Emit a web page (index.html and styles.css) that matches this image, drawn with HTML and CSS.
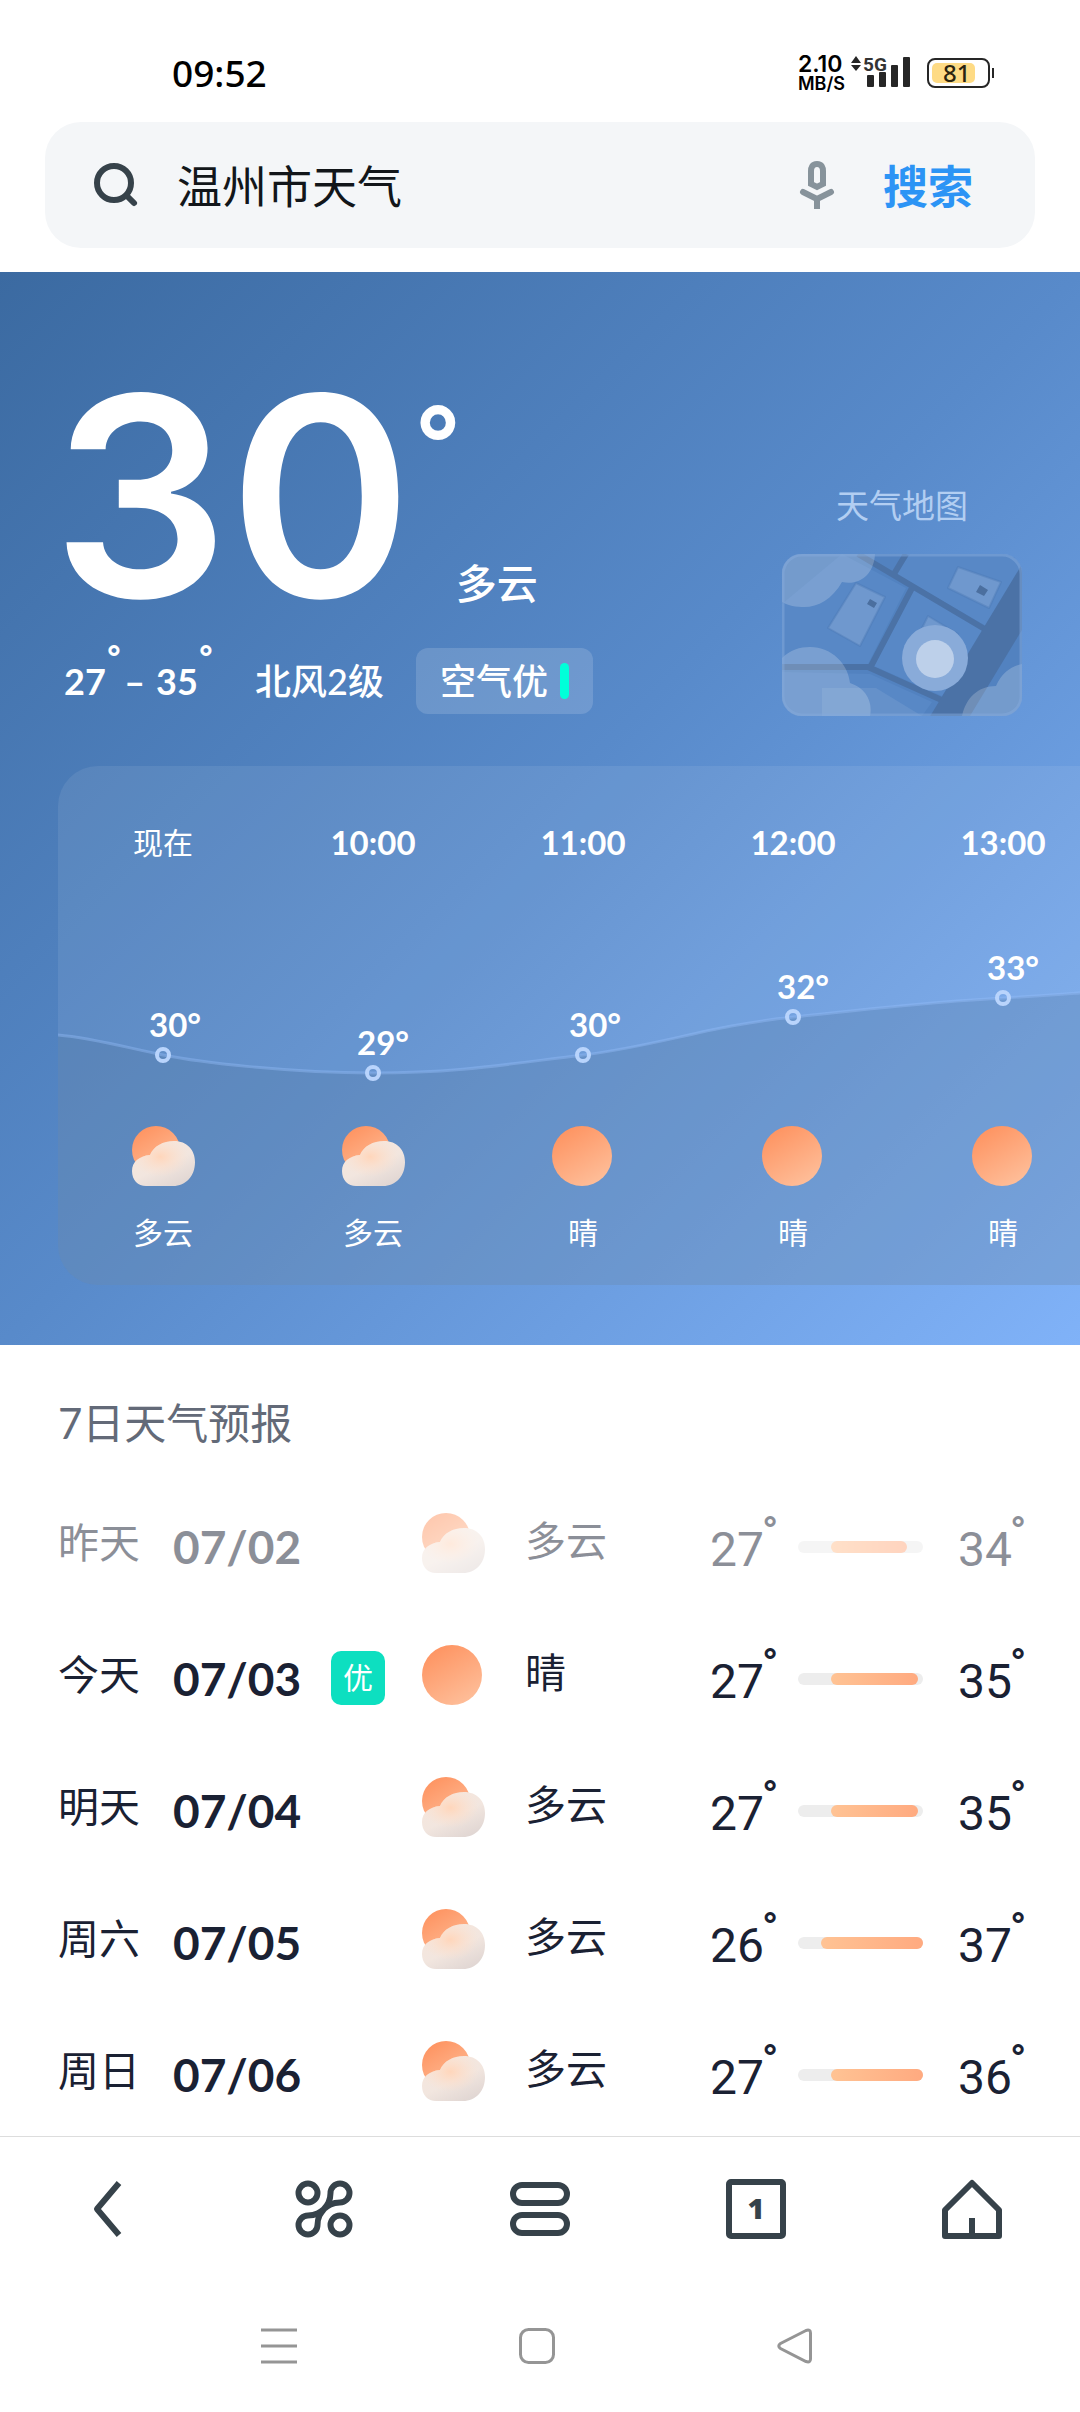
FILE: index.html
```html
<!DOCTYPE html>
<html lang="zh-CN">
<head>
    <meta charset="UTF-8">
    <meta name="viewport" content="width=device-width, initial-scale=1.0">
    <title>温州市天气</title>
    <link rel="stylesheet" href="styles.css">
</head>
<body>

    <!-- shared gradients and weather icons -->
    <svg class="defs" aria-hidden="true">
        <defs>
            <linearGradient id="sunFill" x1="0.2" y1="0" x2="0.8" y2="1">
                <stop offset="0" stop-color="#fe925f"/>
                <stop offset="1" stop-color="#fec09c"/>
            </linearGradient>
            <linearGradient id="cloudFill" x1="0.2" y1="0.1" x2="0.8" y2="1">
                <stop offset="0" stop-color="#f6e6dc"/>
                <stop offset="0.5" stop-color="#f2e6df"/>
                <stop offset="1" stop-color="#dfd5d2"/>
            </linearGradient>
            <radialGradient id="cloudGlow" cx="0.45" cy="0.35" r="0.45">
                <stop offset="0" stop-color="#ffd6bb"/>
                <stop offset="1" stop-color="#ffe0cc" stop-opacity="0"/>
            </radialGradient>
            <symbol id="sunny" viewBox="0 0 63 60">
                <circle cx="30" cy="30" r="30" fill="url(#sunFill)"/>
            </symbol>
            <symbol id="cloudy" viewBox="0 0 63 60">
                <circle cx="24" cy="24" r="24" fill="url(#sunFill)"/>
                <path fill="url(#cloudFill)" d="M14 60C6 60 0 54 0 45C0 36 7 30 18 29C22 20 31 15 42 15C55 15 63 24 63 36C63 50 54 60 41 60Z"/>
                <path fill="url(#cloudGlow)" d="M14 60C6 60 0 54 0 45C0 36 7 30 18 29C22 20 31 15 42 15C55 15 63 24 63 36C63 50 54 60 41 60Z"/>
            </symbol>
        </defs>
    </svg>

    <header>
        <div class="status">
            <span class="clock">09:52</span>
            <div class="status-right">
                <div class="speed"><b>2.10</b><span>MB/S</span></div>
                <svg class="signal" width="60" height="36" viewBox="0 0 60 36">
                    <path fill="#262626" d="M0 8L5 1L10 8ZM0 10L5 16L10 10Z"/>
                    <text x="12" y="16">5G</text>
                    <g fill="#262626">
                        <rect x="16" y="20" width="7" height="12" rx="1"/>
                        <rect x="28" y="17" width="7" height="15" rx="1"/>
                        <rect x="40" y="10" width="7" height="22" rx="1"/>
                        <rect x="52" y="2" width="7" height="30" rx="1"/>
                    </g>
                </svg>
                <div class="battery"><span>81</span></div>
            </div>
        </div>

        <form class="search">
            <svg width="46" height="46" viewBox="0 0 46 46" fill="none" stroke="#36424a" stroke-width="6" stroke-linecap="round">
                <circle cx="21" cy="21" r="17"/>
                <path d="M34 34L41 41"/>
            </svg>
            <input type="text" value="温州市天气" aria-label="搜索天气">
            <button type="button" class="mic" aria-label="语音">
                <svg width="36" height="50" viewBox="0 0 36 50" fill="none" stroke="#87939b" stroke-width="6">
                    <path d="M18 4C13 4 12 8 12 11V24L18 27L24 24V11C24 8 23 4 18 4Z"/>
                    <path d="M18 49V39"/>
                    <path stroke-linecap="round" stroke-linejoin="round" d="M4 32L18 39L32 32"/>
                </svg>
            </button>
            <button type="button" class="go">搜索</button>
        </form>
    </header>

    <main>
        <section class="hero">
            <div class="now">
                <div class="now-left">
                    <div class="temp-line">
                        <span class="temp">30</span><span class="deg">°</span>
                        <span class="sky">多云</span>
                    </div>
                    <div class="detail">
                        <div class="range"><span>27</span><sup>°</sup><span class="dash">–</span><span>35</span><sup>°</sup></div>
                        <span class="wind">北风2级</span>
                        <span class="air">空气优<i></i></span>
                    </div>
                </div>
                <a class="map" href="#">
                    <span>天气地图</span>
                    <svg width="240" height="162" viewBox="0 0 240 162">
                        <clipPath id="mapClip"><rect width="240" height="162" rx="20"/></clipPath>
                        <g clip-path="url(#mapClip)">
                            <rect width="240" height="162" fill="#5282c0"/>
                            <path fill="#5888c6" d="M128 0H240V20L204 72L114 20ZM130 34L204 78L160 142L92 112ZM88 120L150 148L140 162H0V118ZM0 50L60 0L124 34L86 110H0Z"/>
                            <g fill="none" stroke="#4b72a6" stroke-width="6">
                                <path d="M76 0L206 77M124 0L112 20M130 34L88 114M0 113H86L164 148"/>
                                <path stroke-width="34" d="M260 10L156 182"/>
                            </g>
                            <path fill="#fff" fill-opacity=".14" stroke="#4b79b3" stroke-opacity=".4" stroke-width="2" stroke-linejoin="round" d="M74 29L103 43L78 92L46 74ZM176 13L219 28L207 54L166 34ZM146 62L176 80L160 124L122 110Z"/>
                            <path fill="#4b6f9f" d="M88 45L95 49L92 54L85 50ZM198 31L206 36L202 42L194 38Z"/>
                            <path fill="#fff" fill-opacity=".08" d="M40 134H94L140 162H40Z"/>
                            <path fill="#fff" fill-opacity=".2" d="M0 0H93C92 20 78 32 60 28C50 46 34 54 20 53C10 53 4 50 0 48ZM0 104C8 96 18 93 28 93C50 93 66 110 68 129C84 134 91 148 88 162H0ZM180 162C184 144 196 132 214 132C220 118 230 112 240 110V162Z"/>
                            <circle cx="153" cy="104" r="33" fill="#89abd9"/>
                            <circle cx="153" cy="105" r="19" fill="#bdd0ea"/>
                        </g>
                        <rect x="1" y="1" width="238" height="160" rx="19" fill="none" stroke="#83a9dc" stroke-opacity=".5" stroke-width="3"/>
                    </svg>
                </a>
            </div>

            <div class="hourly">
                <svg class="curve" width="1050" height="519" viewBox="0 0 1050 519">
                    <path class="area" d="M0 269C35 272 70 282 105 289S230 307 315 307S450 298 525 289S650 260 735 251S875 236 945 232S1015 227 1050 225V519H0Z"/>
                    <path class="line" d="M0 269C35 272 70 282 105 289S230 307 315 307S450 298 525 289S650 260 735 251S875 236 945 232S1015 227 1050 225"/>
                    <g class="dots">
                        <circle cx="105" cy="289" r="6"/>
                        <circle cx="315" cy="307" r="6"/>
                        <circle cx="525" cy="289" r="6"/>
                        <circle cx="735" cy="251" r="6"/>
                        <circle cx="945" cy="232" r="6"/>
                    </g>
                    <text x="117" y="271">30°</text>
                    <text x="325" y="289">29°</text>
                    <text x="537" y="271">30°</text>
                    <text x="745" y="233">32°</text>
                    <text x="955" y="214">33°</text>
                </svg>
                <div class="hour"><span class="now-label">现在</span><svg><use href="#cloudy"/></svg><em>多云</em></div>
                <div class="hour"><span>10:00</span><svg><use href="#cloudy"/></svg><em>多云</em></div>
                <div class="hour"><span>11:00</span><svg><use href="#sunny"/></svg><em>晴</em></div>
                <div class="hour"><span>12:00</span><svg><use href="#sunny"/></svg><em>晴</em></div>
                <div class="hour"><span>13:00</span><svg><use href="#sunny"/></svg><em>晴</em></div>
            </div>
        </section>

        <section class="forecast">
            <h2>7日天气预报</h2>
            <table>
                <colgroup>
                    <col class="c-day"><col class="c-date"><col class="c-air"><col class="c-icon"><col>
                    <col class="c-low"><col class="c-bar"><col class="c-high">
                </colgroup>
                <tr class="past">
                    <td>昨天</td><td class="date">07/02</td><td></td>
                    <td><svg><use href="#cloudy"/></svg></td><td class="desc">多云</td>
                    <td class="num"><span>27</span><sup>°</sup></td>
                    <td class="scale"><div class="bar"><i style="margin-left: 26%; width: 61%"></i></div></td>
                    <td class="num"><span>34</span><sup>°</sup></td>
                </tr>
                <tr>
                    <td>今天</td><td class="date">07/03</td><td class="air-cell"><span class="badge">优</span></td>
                    <td><svg><use href="#sunny"/></svg></td><td class="desc">晴</td>
                    <td class="num"><span>27</span><sup>°</sup></td>
                    <td class="scale"><div class="bar"><i style="margin-left: 26%; width: 70%"></i></div></td>
                    <td class="num"><span>35</span><sup>°</sup></td>
                </tr>
                <tr>
                    <td>明天</td><td class="date">07/04</td><td></td>
                    <td><svg><use href="#cloudy"/></svg></td><td class="desc">多云</td>
                    <td class="num"><span>27</span><sup>°</sup></td>
                    <td class="scale"><div class="bar"><i style="margin-left: 26%; width: 70%"></i></div></td>
                    <td class="num"><span>35</span><sup>°</sup></td>
                </tr>
                <tr>
                    <td>周六</td><td class="date">07/05</td><td></td>
                    <td><svg><use href="#cloudy"/></svg></td><td class="desc">多云</td>
                    <td class="num"><span>26</span><sup>°</sup></td>
                    <td class="scale"><div class="bar"><i style="margin-left: 18%; width: 82%"></i></div></td>
                    <td class="num"><span>37</span><sup>°</sup></td>
                </tr>
                <tr>
                    <td>周日</td><td class="date">07/06</td><td></td>
                    <td><svg><use href="#cloudy"/></svg></td><td class="desc">多云</td>
                    <td class="num"><span>27</span><sup>°</sup></td>
                    <td class="scale"><div class="bar"><i style="margin-left: 26%; width: 74%"></i></div></td>
                    <td class="num"><span>36</span><sup>°</sup></td>
                </tr>
            </table>
        </section>
    </main>

    <nav class="toolbar">
        <button aria-label="返回"><svg viewBox="0 0 60 60"><path d="M41 4L19 30L41 56" stroke-linejoin="round"/></svg></button>
        <button aria-label="发现"><svg viewBox="0 0 60 60">
            <circle cx="14" cy="14" r="9.5"/><circle cx="46" cy="46" r="9.5"/>
            <path d="M46 4.5A9.5 9.5 0 0 1 46 23.5C30 23.5 30 36.5 14 36.5A9.5 9.5 0 1 0 23.5 46C23.5 30 36.5 30 36.5 14A9.5 9.5 0 0 1 46 4.5"/>
        </svg></button>
        <button aria-label="菜单"><svg viewBox="0 0 60 60">
            <rect x="3" y="6" width="54" height="18" rx="9"/><rect x="3" y="36" width="54" height="18" rx="9"/>
        </svg></button>
        <button aria-label="标签页"><svg viewBox="0 0 60 60">
            <rect x="3" y="3" width="54" height="54" rx="2"/><text x="30" y="40">1</text>
        </svg></button>
        <button aria-label="主页"><svg viewBox="0 0 60 60">
            <path d="M3 31L30 4L57 31V57H3ZM30 57V39" stroke-linejoin="round"/>
        </svg></button>
    </nav>

    <nav class="system">
        <button aria-label="最近任务"><svg viewBox="0 0 36 36"><path d="M0 2H36M0 18H36M0 34H36"/></svg></button>
        <button aria-label="桌面"><svg viewBox="0 0 36 36"><rect x="1.500" y="1.500" width="33" height="33" rx="8"/></svg></button>
        <button aria-label="后退"><svg viewBox="0 0 36 36"><path d="M29 2.500L3.500 15.500Q0 18 3.500 20.500L29 33.500Q33.500 35 33.500 31V5Q33.500 1 29 2.500Z"/></svg></button>
    </nav>

</body>
</html>
```
FILE: styles.css
```css
* { box-sizing: border-box; }
html, body { height: 100%; }
body { margin: 0; display: flex; flex-direction: column; background: #fff; color: #1a2133; font-family: Lato, "Noto Sans CJK SC", sans-serif; }
button { border: none; padding: 0; background: none; font-family: inherit; cursor: pointer; }
i, em { font-style: normal; }
svg { display: block; flex: none; }
.defs { position: absolute; width: 0; height: 0; }

/* status bar */
header { flex: none; padding-bottom: 24px; background: #fff; }
.status { display: flex; justify-content: space-between; align-items: center; height: 122px; padding: 24px 90px 0 172px; color: #000; }
.clock { font: 500 37px/44px "Noto Sans", sans-serif; }
.status-right { display: flex; align-items: center; }
.speed { display: flex; flex-direction: column; width: 53px; font-family: Inter, sans-serif; }
.speed b { font-size: 23px; line-height: 22px; font-weight: 600; }
.speed span { font-size: 18px; line-height: 18px; font-weight: 600; }
.signal { margin-right: 16px; overflow: visible; }
.signal text { font: 700 19px Roboto, sans-serif; fill: #333; }
.battery { position: relative; width: 63px; height: 30px; padding: 3px 13px 3px 3px; border: 2px solid #262626; border-radius: 8px; color: #2b2410; }
.battery::after { content: ""; position: absolute; right: -6px; top: 8px; width: 2px; height: 10px; background: #262626; }
.battery span { display: block; height: 20px; padding-left: 11px; border-radius: 5px; background: #fedb85; font: 500 24px/20px "Noto Sans", sans-serif; }

.search { display: flex; align-items: center; height: 126px; margin: 0 45px; padding: 0 62px 0 48px; border-radius: 36px; background: #f4f6f8; }
.search input { flex: 1; min-width: 0; margin: 0 24px 0 38px; padding: 0; border: none; outline: none; background: none; color: #12161a; font: 400 45px/60px "Noto Sans CJK SC", sans-serif; }
.go { margin-left: 48px; padding-top: 3px; color: #2c94f5; font-size: 45px; line-height: 60px; font-weight: 700; }

main { flex: 1; min-height: 0; overflow: hidden; }

/* current weather */
.hero { padding: 104px 0 60px 58px; background: linear-gradient(to bottom right, #3b6aa1, #588aca 50%, #80b2f8); color: #fff; }
.now { display: flex; justify-content: space-between; padding-right: 58px; }
.temp-line { display: flex; height: 248px; }
.temp { margin-left: -6px; font: 600 278px/240px Inter, sans-serif; }
.deg { margin-right: -8px; font: 700 132px/158px Roboto, sans-serif; }
.sky { align-self: flex-end; font-size: 41px; line-height: 60px; margin-bottom: 10px; font-weight: 500; }
.detail { display: flex; align-items: center; height: 66px; margin-top: 24px; padding-left: 6px; font-size: 36px; line-height: 60px; font-weight: 500; }
.range { display: flex; align-items: baseline; width: 191px; font-weight: 700; }
.dash { margin: 0 11px 0 2px; }
sup { font: 700 42px/20px Roboto, sans-serif; vertical-align: 20px; }
.range sup { align-self: flex-start; }
.wind { margin-right: 32px; }
.air { display: flex; align-items: center; gap: 12px; height: 66px; padding: 0 24px; border-radius: 12px; background: rgba(255, 255, 255, .15); }
.air i { width: 9px; height: 36px; border-radius: 5px; background: #00ffd9; }
.map { display: flex; flex-direction: column; align-items: center; gap: 24px; margin-top: 104px; color: #b2cef2; font-size: 33px; line-height: 50px; text-decoration: none; }

/* hourly */
.hourly { position: relative; display: flex; height: 519px; margin-top: 50px; overflow: hidden; border-radius: 40px 0 0 40px; background: rgba(255, 255, 255, .08); }
.curve { position: absolute; left: 0; top: 0; }
.curve text { fill: #fff; font: 700 33px Lato, sans-serif; text-anchor: middle; }
.area { fill: rgba(80, 115, 155, .28); }
.line { fill: none; stroke: rgba(150, 190, 250, .4); stroke-width: 3; }
.dots { fill: none; stroke: #b9d4fc; stroke-width: 4; }
.hour { position: relative; flex: none; display: flex; flex-direction: column; align-items: center; width: 210px; padding-top: 54px; font-size: 33px; line-height: 44px; font-weight: 700; }
.hour svg { width: 63px; height: 60px; margin: 262px 0 24px; }
.hour em, .hour .now-label { font-size: 30px; font-weight: 400; }

/* 7 day list */
.forecast { padding: 48px 58px 0; }
h2 { margin: 0 0 27px; color: #636a78; font-size: 42px; line-height: 60px; font-weight: 400; }
table { width: 100%; table-layout: fixed; border-collapse: collapse; font-size: 41px; line-height: 60px; }
td { height: 132px; padding: 0 0 6px; }
.c-day { width: 115px; }
.c-date { width: 158px; }
.c-air { width: 91px; }
.c-icon { width: 103px; }
.c-low { width: 88px; }
.c-bar { width: 160px; }
.c-high { width: 64px; }
td svg { width: 63px; height: 60px; }
.date { padding: 2px 0 0; font-size: 46px; font-weight: 700; }
.air-cell { padding: 0; }
.desc { padding-bottom: 10px; }
.num { padding: 8px 0 0; font-family: Roboto, sans-serif; font-size: 48px; white-space: nowrap; }
.num sup { margin-left: -2px; }
.scale { padding: 2px 0 0; }
.badge { display: block; width: 54px; height: 54px; border-radius: 10px; background: #0ddfc0; color: #fff; font-size: 30px; line-height: 52px; text-align: center; }
.bar { width: 125px; height: 12px; border-radius: 6px; background: #ededed; }
.bar i { display: block; height: 12px; border-radius: 6px; background: linear-gradient(90deg, #ffc394, #ffaa80); }
.past td { opacity: .5; }

.toolbar { flex: none; display: flex; height: 144px; border-top: 1px solid #ddd; background: #fff; }
.toolbar button { flex: 1; display: flex; align-items: center; justify-content: center; }
.toolbar svg { width: 60px; height: 60px; fill: none; stroke: #36424a; stroke-width: 6; }
.toolbar text { fill: #36424a; stroke: none; font: 800 29px "Open Sans", sans-serif; text-anchor: middle; }
.system { flex: none; display: flex; height: 132px; padding: 0 156px 0 150px; background: #fff; }
.system button { flex: 1; display: flex; align-items: center; justify-content: center; }
.system svg { width: 36px; height: 36px; fill: none; stroke: #959595; stroke-width: 3; }
```
